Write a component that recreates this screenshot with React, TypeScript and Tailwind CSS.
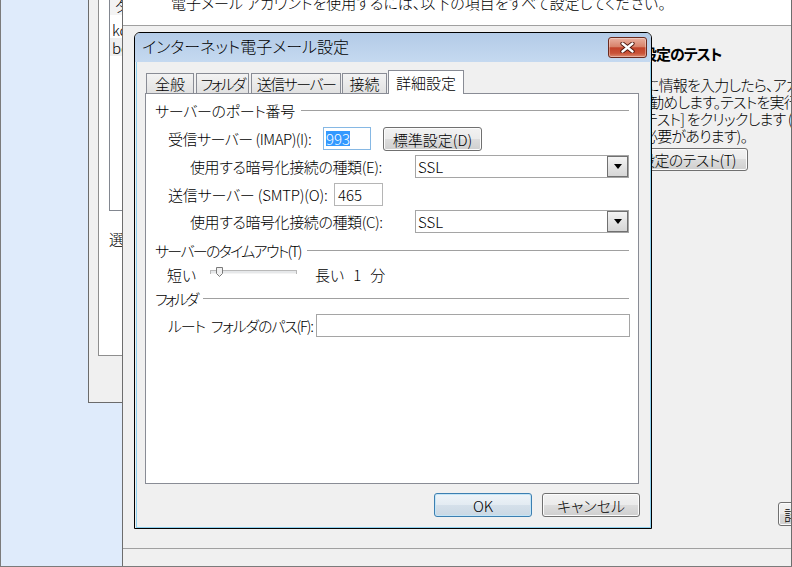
import React from "react";

const tabs = [
  { label: "全般", cls: "ml-[1px] w-[48px]" },
  { label: "フォルダ", cls: "ml-[2px] w-[53px] tracking-[-2px]" },
  { label: "送信サーバー", cls: "ml-[2px] w-[90px] tracking-[-1.5px]" },
  { label: "接続", cls: "ml-[1px] w-[45px]" },
];

function GroupHeader({ label, className, textClass = "" }: { label: string; className: string; textClass?: string }) {
  return (
    <div className={`flex h-[16px] items-center pl-[9px] pr-[9px] ${className}`}>
      <span className={`whitespace-nowrap ${textClass}`}>{label}</span>
      <div className="ml-[6px] h-px flex-1 bg-[#a0a0a0]" />
    </div>
  );
}

function Select({ value }: { value: string }) {
  return (
    <div className="flex h-[23px] w-[214px] items-center border border-[#a5a5a5] bg-white">
      <span className="flex-1 pl-[2px]">{value}</span>
      <div className="flex h-[21px] w-[21px] items-center justify-center border border-[#707070] bg-[linear-gradient(#f4f4f4,#e4e4e4_50%,#d6d6d6)]">
        <svg width="8" height="5" viewBox="0 0 8 5">
          <path d="M0 0h8L4 5z" fill="#000" />
        </svg>
      </div>
    </div>
  );
}

function CloseButton() {
  return (
    <div className="flex h-[21px] w-[39px] shrink-0 items-center justify-center rounded-[3px] border border-[#6b2a1e] bg-[linear-gradient(#eab0a0,#d8836b_45%,#c2432a_52%,#c95237_80%,#dc8a70)] shadow-[inset_0_0_0_1px_rgba(255,255,255,0.35)]">
      <svg width="15" height="11" viewBox="0 0 15 11">
        <path d="M2.5 1.5L12.5 9.5M12.5 1.5L2.5 9.5" stroke="#4a1308" strokeWidth="4.2" strokeLinecap="round" />
        <path d="M2.5 1.5L12.5 9.5M12.5 1.5L2.5 9.5" stroke="#fff" strokeWidth="2.4" strokeLinecap="round" />
      </svg>
    </div>
  );
}

function Slider() {
  return (
    <svg width="87" height="18" viewBox="0 0 87 18">
      <rect x="0.5" y="5.5" width="86" height="3" fill="#e6e8ea" stroke="#b9b9b9" />
      <line x1="1" y1="8.5" x2="86" y2="8.5" stroke="#f4f4f4" />
      <path d="M6.5 2.5h6v6l-3 3l-3-3z" fill="#f0f0f0" stroke="#7a7a7a" />
    </svg>
  );
}

function LeftWindow() {
  return (
    <div className="absolute left-[87px] top-[-20px] flex h-[423px] w-[60px] border-b border-l border-[#6b6b6b] bg-[#f0f0f0] pl-[9px]">
      <div className="flex h-[376px] w-full flex-col border-b border-l border-[#8e8e8e] bg-white">
        <div className="ml-[10px] flex h-[231px] flex-col border-b border-l border-[#828790]">
          <div className="flex h-[35px] items-end whitespace-nowrap bg-[#f3f3f3] pb-[2px] pl-[5px]">タイプ</div>
          <div className="mt-[5px] flex h-[18px] items-center whitespace-nowrap pl-[2px]">kdb</div>
          <div className="flex h-[18px] items-center whitespace-nowrap bg-[#f0f0f0] pl-[2px]">bcc</div>
        </div>
        <div className="ml-[10px] mt-[20px] whitespace-nowrap">選択</div>
      </div>
    </div>
  );
}

function MainWindow() {
  return (
    <div className="absolute left-[121px] top-0 flex h-[567px] w-[670px] flex-col overflow-hidden border-x border-b border-[#6d6d6d] bg-[#f0f0f0]">
      <div className="h-[26px] shrink-0 overflow-hidden border-b border-[#a0a0a0] bg-white pl-[48px]">
        <div className="-mt-[5px] whitespace-nowrap">電子メール アカウントを使用するには、以下の項目をすべて設定してください。</div>
      </div>
      <div className="flex flex-col pl-[505px]">
        <div className="ml-[14px] mt-[19px] whitespace-nowrap font-bold leading-[17px] tracking-[-1px]">設定のテスト</div>
        <div className="mt-[14px] flex flex-col whitespace-nowrap leading-[17px] tracking-[-0.8px]">
          <div className="ml-[17px]">に情報を入力したら、アカウントのテスト</div>
          <div className="ml-[21px]">勧めします。テストを実行するには</div>
          <div className="ml-[16px]">テスト] をクリックします (ネットワーク</div>
          <div className="ml-[15px]">必要があります)。</div>
        </div>
        <div className="mt-[4px] flex h-[23px] w-[120px] items-center justify-end whitespace-nowrap rounded-[3px] border border-[#707070] bg-[linear-gradient(#f2f2f2,#ebebeb_50%,#dddddd_50%,#cfcfcf)] pr-[11px] tracking-[-0.6px] shadow-[inset_0_0_0_1px_#fcfcfc]">
          設定のテスト(T)
        </div>
      </div>
      <div className="mt-auto flex pl-[655px]">
        <div className="flex h-[24px] w-[100px] shrink-0 items-center whitespace-nowrap rounded-[3px] border border-[#707070] bg-[linear-gradient(#f2f2f2,#ebebeb_50%,#dddddd_50%,#cfcfcf)] pl-[5px] shadow-[inset_0_0_0_1px_#fcfcfc]">
          詳細設定(M)...
        </div>
      </div>
      <div className="mt-[22px] h-[18px] shrink-0 border-t border-[#a0a0a0]" />
    </div>
  );
}

function Dialog() {
  return (
    <div className="absolute left-[133px] top-[32px] flex h-[497px] w-[518px] flex-col overflow-hidden rounded-t-[6px] border border-black">
      <div className="flex h-[29px] shrink-0 items-center justify-between bg-[linear-gradient(#b3cbe7,#c5d9f0)] pl-[7px] pr-[4px]">
        <span className="-mt-[2px] whitespace-nowrap text-[16px]">インターネット電子メール設定</span>
        <CloseButton />
      </div>
      <div className="flex flex-1 flex-col bg-[#f0f0f0] pl-[1px]">
        <div className="flex flex-1 flex-col border-x border-b border-[#8fd1ef] pl-[8px] pr-[11px] pt-[8px]">
          <div className="relative z-10 -mb-px flex h-[24px] items-end">
            {tabs.map((t) => (
              <div
                key={t.label}
                className={`${t.cls} flex h-[21px] items-center justify-center whitespace-nowrap border border-[#898c95] bg-[linear-gradient(#f3f3f3,#e1e1e1)]`}
              >
                {t.label}
              </div>
            ))}
            <div className="ml-[1px] flex h-[24px] w-[76px] items-center justify-center whitespace-nowrap border-x border-t border-[#898c95] bg-white">
              詳細設定
            </div>
          </div>

          <div className="flex h-[391px] flex-col border border-[#898c95] bg-white">
            <GroupHeader label="サーバーのポート番号" className="mt-[8px]" textClass="tracking-[-0.3px]" />

            <div className="mt-[9px] flex h-[23px] items-start pl-[22px]">
              <span className="flex h-[23px] w-[155px] items-center whitespace-nowrap tracking-[-0.5px]">受信サーバー (IMAP)(I):</span>
              <div className="flex h-[23px] w-[48px] items-center border border-[#86b8e4] bg-white pl-[2px]">
                <span className="bg-[#3399ff] text-white">993</span>
              </div>
              <div className="ml-[12px] flex h-[24px] w-[99px] items-center justify-center whitespace-nowrap rounded-[3px] border border-[#707070] bg-[linear-gradient(#f2f2f2,#ebebeb_50%,#dddddd_50%,#cfcfcf)] shadow-[inset_0_0_0_1px_#fcfcfc]">
                標準設定(D)
              </div>
            </div>

            <div className="mt-[5px] flex h-[23px] items-center pl-[44px]">
              <span className="w-[225px] whitespace-nowrap tracking-[-0.4px]">使用する暗号化接続の種類(E):</span>
              <Select value="SSL" />
            </div>

            <div className="mt-[5px] flex h-[23px] items-center pl-[22px]">
              <span className="w-[166px] whitespace-nowrap tracking-[-0.2px]">送信サーバー (SMTP)(O):</span>
              <div className="flex h-[23px] w-[49px] items-center border border-[#b5b5b5] bg-white pl-[3px]">465</div>
            </div>

            <div className="mt-[4px] flex h-[23px] items-center pl-[44px]">
              <span className="w-[225px] whitespace-nowrap tracking-[-0.4px]">使用する暗号化接続の種類(C):</span>
              <Select value="SSL" />
            </div>

            <GroupHeader label="サーバーのタイムアウト(T)" className="mt-[9px]" textClass="tracking-[-1.7px]" />

            <div className="mt-[7px] flex h-[18px] items-center pl-[21px]">
              <span className="w-[43px] whitespace-nowrap">短い</span>
              <Slider />
              <span className="ml-[18px] whitespace-nowrap">長い</span>
              <span className="ml-[9px]">1</span>
              <span className="ml-[9px]">分</span>
            </div>

            <GroupHeader label="フォルダ" className="mt-[7px]" textClass="tracking-[-2.5px]" />

            <div className="mt-[8px] flex h-[23px] items-center pl-[22px]">
              <span className="flex w-[148px] whitespace-nowrap tracking-[-1.2px]">
                <span>ルート</span>
                <span className="ml-[6px]">フォルダのパス(F):</span>
              </span>
              <div className="h-[23px] w-[314px] border border-[#a5a5a5] bg-white" />
            </div>
          </div>

          <div className="-mr-px mt-[9px] flex justify-end gap-[10px]">
            <div className="flex h-[24px] w-[98px] items-center justify-center rounded-[3px] border border-[#3c7fb1] bg-[linear-gradient(#eef4f9,#e3ebf2_50%,#d5e0ea_50%,#cad8e4)] shadow-[inset_0_0_0_1px_#c4e5f7]">
              OK
            </div>
            <div className="flex h-[24px] w-[98px] items-center justify-center whitespace-nowrap rounded-[3px] border border-[#707070] bg-[linear-gradient(#f2f2f2,#ebebeb_50%,#dddddd_50%,#cfcfcf)] shadow-[inset_0_0_0_1px_#fcfcfc]">
              キャンセル
            </div>
          </div>
        </div>
      </div>
    </div>
  );
}

export default function App() {
  return (
    <div className='relative h-[567px] w-[792px] overflow-hidden border-b border-l border-[#7b7b7b] bg-[#dfebfb] font-["Noto_Sans_CJK_JP",sans-serif] text-[15px] font-light leading-[15px] text-black [font-feature-settings:"palt"]'>
      <LeftWindow />
      <MainWindow />
      <Dialog />
    </div>
  );
}
